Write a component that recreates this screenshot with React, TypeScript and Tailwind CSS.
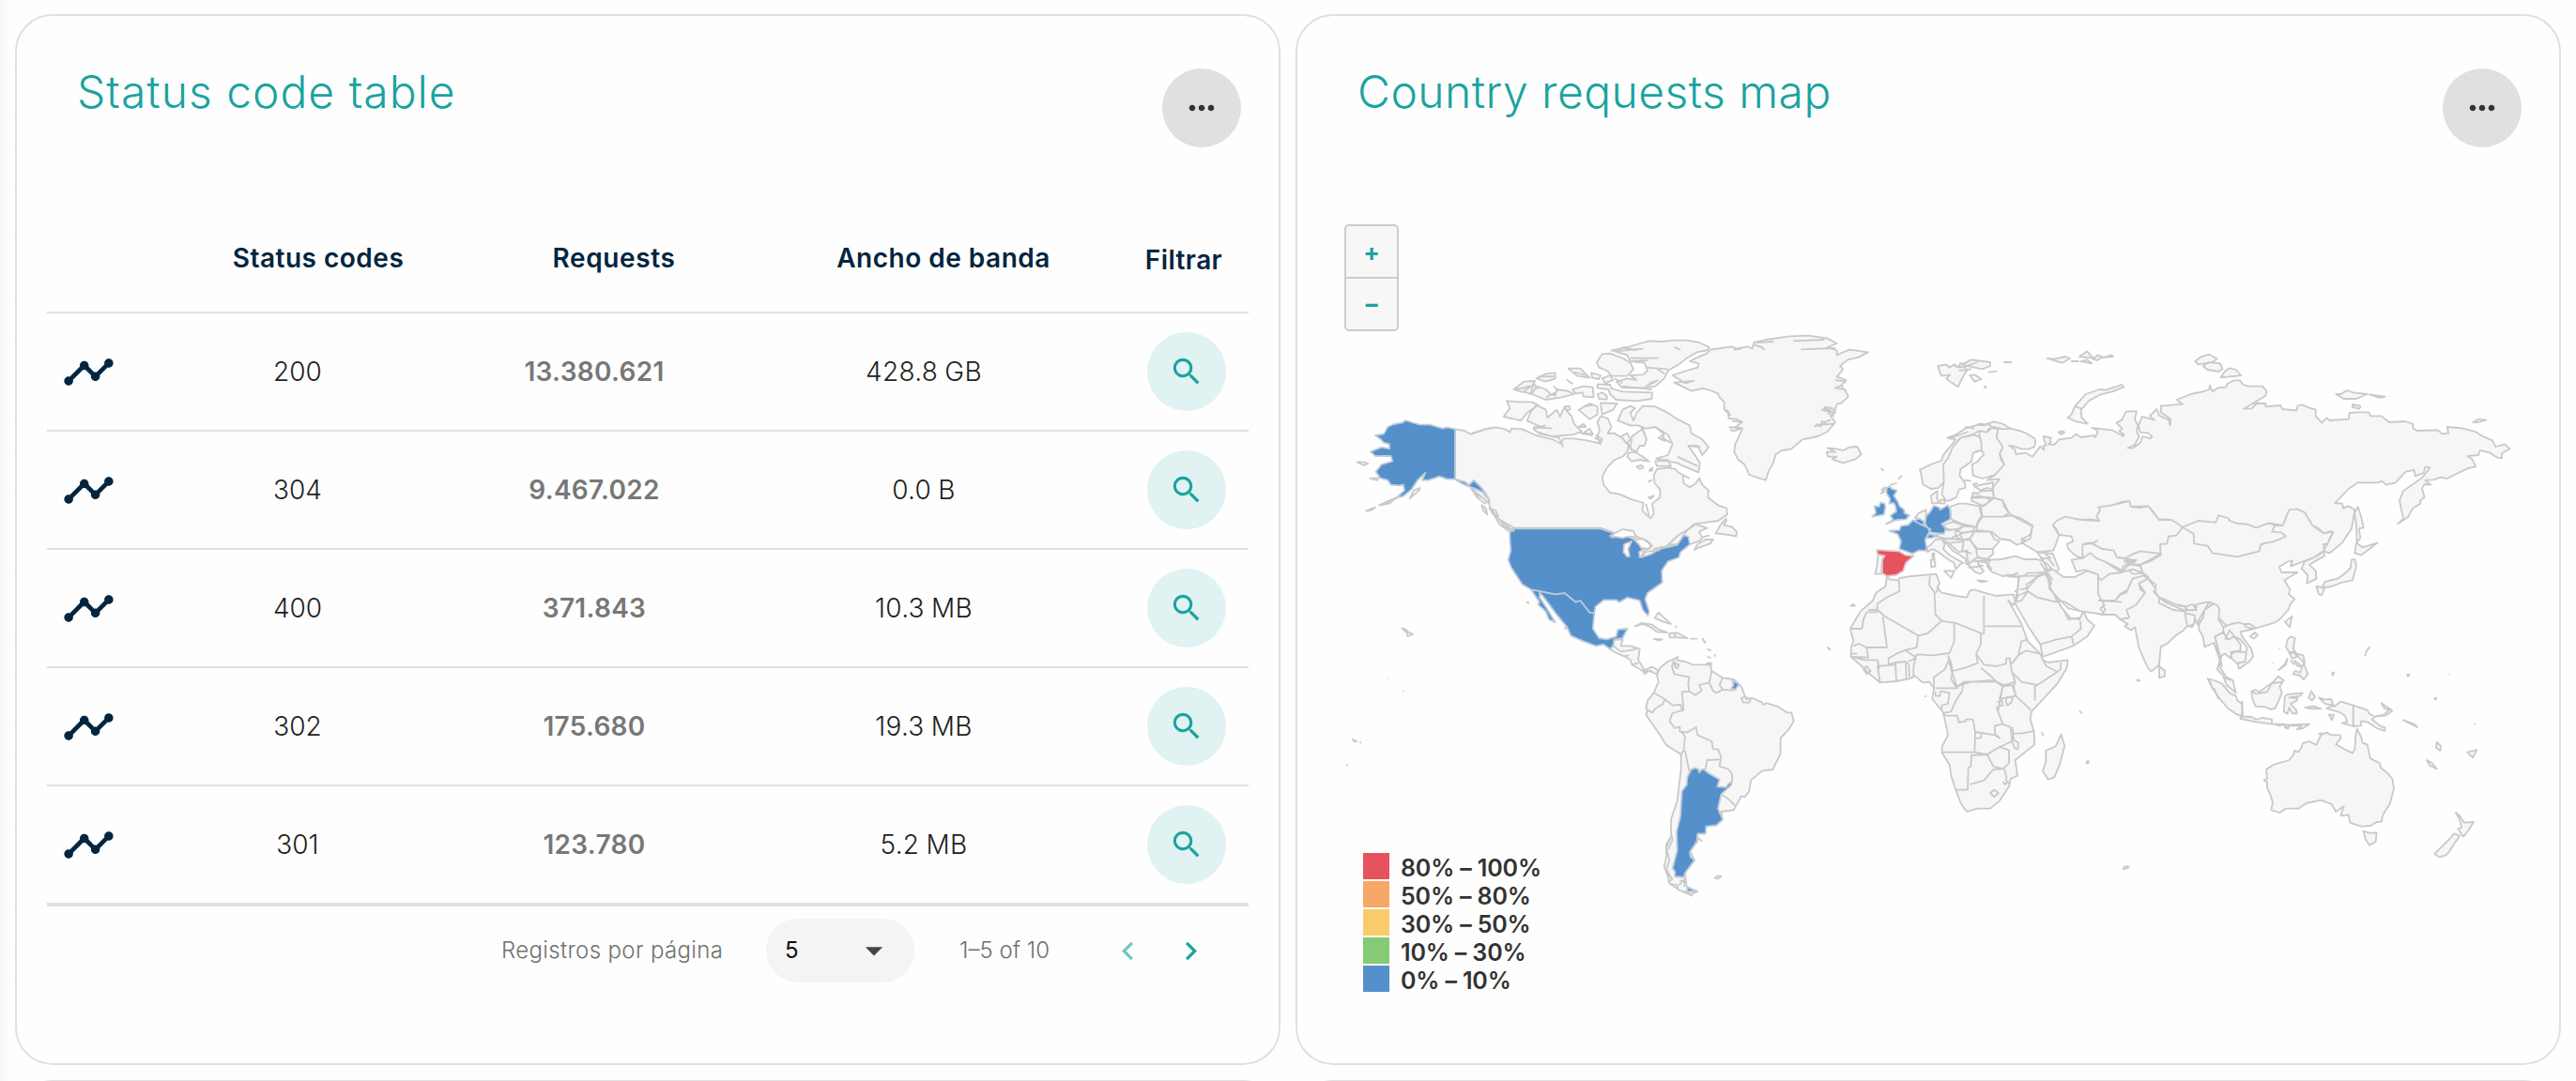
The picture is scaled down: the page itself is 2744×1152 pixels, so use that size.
import React from 'react';
import { MdTimeline, MdSearch, MdMoreHoriz, MdArrowDropDown, MdChevronLeft, MdChevronRight } from 'react-icons/md';

type Tile = { x: number; y: number; land?: string; blue?: string; red?: string; water?: string; lines?: string };

// Each tile holds outlines at three units per pixel, offset from its own origin.
const tiles: Tile[] = [
  // Russia, central and east Asia
  {
    x: 2200,
    y: 350,
    land:
      'M-175 320L-150 326L-125 335L-98 352L-95 364L-100 380L-118 386L-140 385L-165 377L-180 375L-160 388L-158 402L-125 398L-105 410L-90 390L-80 377L-68 388L-70 375L-62 374L-70 345L-45 350L-50 357L-45 364L-55 370L-35 372L-20 355L20 350L35 338L50 348L92 342L95 348L104 330L96 322L85 318L150 325L185 345L188 340L172 328L182 320L163 302L180 293L195 265L228 265L222 290L232 310L228 330L236 345L222 372L200 382L215 383L240 365L247 345L272 352L278 346L264 334L238 332L234 310L245 282L285 293L270 280L292 258L300 278L330 292L335 310L337 290L305 268L305 248L375 242L356 228L372 222L400 210L440 202L460 195L462 182L470 202L488 190L512 188L520 175L540 166L558 166L568 180L585 185L630 185L643 200L640 215L570 257L595 256L615 237L600 240L640 240L640 250L688 246L694 258L740 262L742 248L756 244L780 254L800 260L800 280L820 302L835 286L845 294L905 290L908 270L930 268L970 268L975 280L1010 280L1035 300L1085 297L1110 305L1112 320L1125 327L1190 325L1205 337L1225 335L1220 315L1260 318L1310 330L1330 343L1365 358L1375 378L1405 370L1420 385L1395 400L1395 415L1378 412L1358 398L1325 390L1320 405L1285 408L1300 418L1312 442L1290 446L1250 465L1220 480L1200 476L1175 484L1150 485L1168 500L1148 498L1140 512L1148 540L1135 550L1135 560L1110 575L1096 602L1082 612L1062 625L1080 608L1068 550L1080 520L1140 478L1165 445L1150 443L1145 462L1118 472L1115 453L1088 458L1055 493L1025 500L1012 488L1000 493L935 493L905 513L862 558L885 560L888 575L905 568L925 580L915 640L885 685L845 718L825 712L838 688L855 655L850 648L825 655L810 640L790 630L765 588L740 577L715 580L708 598L695 630L650 622L610 637L580 626L550 624L525 615L520 606L490 598L480 620L425 615L375 635L340 612L310 610L300 612L280 585L265 568L240 573L210 570L205 552L180 555L150 565L105 572L112 580L100 600L108 615L80 610L50 612L0 602L-28 615L-40 630L-28 642L-20 660L-30 690L-38 710L-90 715L-140 685L-112 672L-105 630L-140 608L-170 598L-180 590L-200 550L-228 542L-232 510L-210 482L-250 485L-225 468L-195 435L-210 400L-200 380L-220 350L-215 320Z' +
      'M375 635L425 615L480 620L490 598L520 606L525 615L550 624L580 626L610 637L650 622L670 630L660 650L690 652L705 665L670 680L625 690L620 712L550 730L470 718L455 695L412 688L410 657Z' +
      'M375 635L410 657L412 688L455 695L470 718L550 730L620 712L625 690L670 680L705 665L690 652L660 650L670 630L695 630L708 598L715 580L740 577L765 588L790 630L825 655L855 650L838 688L825 690L828 712L800 730L760 745L722 760L725 742L712 745L684 762L690 780L705 780L742 780L700 805L718 835L714 850L733 865L720 880L712 900L685 930L670 940L610 958L590 945L555 945L515 950L505 940L490 925L485 890L460 875L440 880L410 895L365 885L350 885L320 872L300 860L285 840L290 820L265 800L245 780L240 755L270 745L305 725L303 690L325 688L330 665L355 662Z' +
      'M-40 630L-28 615L0 602L50 612L108 615L100 600L112 580L105 572L150 565L205 552L210 570L265 568L300 612L340 612L375 635L355 662L330 665L325 688L303 690L305 720L240 712L215 722L190 735L165 732L155 710L118 705L80 685L55 690L55 735L30 725L10 705L5 690L25 680L20 665L-20 660Z' +
      'M55 735L80 718L100 735L125 745L180 780L140 785L115 805L90 780L60 772L35 778L20 740L45 735ZM55 690L80 685L118 705L155 710L165 732L190 735L205 750L185 775L125 745L100 735L80 718L55 735ZM190 735L215 722L240 712L305 720L270 740L240 755L210 755L225 742ZM180 780L185 760L215 755L240 760L248 782L215 770Z' +
      'M105 795L115 805L140 785L180 780L205 772L215 785L248 782L265 795L215 800L200 835L175 850L160 870L115 872L103 855Z' +
      'M755 768L765 745L790 735L825 712L828 728L805 740L780 755L800 775L803 800L772 815L775 790L762 775ZM930 685L950 700L998 685L965 710L945 725L925 718ZM925 738L930 760L918 805L885 812L850 825L820 830L830 810L870 800L895 782L912 765L914 740ZM802 825L830 828L820 852L810 850ZM935 570L945 600L953 637L938 640L943 670L932 685L930 630L924 590Z' +
      'M8 285L20 275L30 250L65 210L110 195L130 197L180 180L187 187L150 202L110 212L75 232L50 260L52 285L72 305L35 298ZM415 105L435 90L460 83L485 97L470 108L425 115ZM440 120L460 108L495 112L502 130L490 138L455 132ZM497 157L510 137L525 127L545 132L562 150ZM865 210L880 210L900 198L920 205L965 210L930 225L890 225ZM972 211L1022 218L1005 222ZM917 243L943 248L940 257L918 252ZM1303 300L1320 290L1345 293L1320 300ZM-22 332L-12 328L-3 332L-12 339Z',
    lines: 'M30 250L55 257M78 690L105 678M85 685L98 695M60 690L95 685M185 745L230 740M190 752L225 745M725 742L720 762',
  },
  // South and south-east Asia, Oceania
  {
    x: 2220,
    y: 600,
    land:
      'M50 120L55 122L100 120L115 102L135 95L155 50L190 40L205 50L175 65L195 95L165 135L135 150L145 175L115 180L100 165L55 165L68 150Z' +
      'M175 65L205 50L230 85L222 92L240 110L260 125L320 152L360 150L350 135L390 125L415 130L385 150L380 175L365 200L355 180L352 195L325 205L318 215L295 230L265 258L245 268L240 325L215 347L205 337L190 305L175 270L163 205L150 215L130 202L140 195L115 180L145 175L135 150L165 135L195 95L180 85Z' +
      'M240 110L260 118L300 135L325 140L323 155L285 150L240 128ZM322 160L355 168L352 190L345 205L330 200ZM325 140L345 132L360 140L355 150L330 150ZM240 330L258 345L258 362L240 367Z' +
      'M365 185L385 150L400 125L425 135L432 145L430 180L445 205L445 220L418 235L425 260L435 300L440 330L415 255L385 268L380 235L368 215Z' +
      'M418 235L445 222L460 245L480 235L500 260L500 280L470 285L470 305L450 290L440 295L432 330L455 365L475 375L485 415L455 390L445 360L425 340L435 310Z' +
      'M445 205L470 195L495 190L510 195L520 205L545 210L500 220L505 235L535 275L540 300L528 315L495 338L490 320L515 315L520 270L500 245L490 240L480 235L460 245L445 220ZM470 290L485 283L518 285L515 315L490 322L472 305ZM530 235L545 222L555 230L543 242ZM642 188L665 170L657 205Z' +
      'M650 245L660 235L674 240L668 275L680 290L655 285L645 268ZM655 285L670 285L680 300L665 305ZM680 290L700 295L705 318L695 312L685 300ZM672 312L685 320L695 332L680 328ZM668 355L675 345L690 350L702 320L715 355L702 372L690 360ZM622 342L640 325L650 305L645 325Z' +
      'M395 370L415 375L440 385L465 415L485 425L490 440L505 450L507 488L490 485L460 465L430 430L410 400ZM500 490L535 492L550 500L570 495L600 500L600 515L550 508L500 498ZM605 515L640 515L625 520ZM640 518L720 515L700 528L680 532L695 520L655 520L650 530ZM535 410L548 405L560 412L605 380L620 362L638 375L625 395L632 415L622 440L610 465L595 468L580 460L548 458L538 435ZM642 425L650 420L698 415L690 425L655 430L682 432L680 440L660 450L678 470L680 482L665 480L655 462L650 482L638 475L640 455ZM718 430L726 410L738 428L728 440ZM707 462L735 458L757 466L725 466Z' +
      'M750 430L770 436L790 435L798 460L820 443L860 455L905 470L912 482L930 492L920 500L945 520L962 527L960 537L935 528L905 508L885 505L885 520L860 522L825 512L840 508L835 490L820 478L775 465L795 455L770 450ZM933 490L965 488L985 472L950 448L960 465L975 470L958 485ZM1020 502L1055 515L1065 525L1045 515ZM1127 573L1140 585L1138 600L1125 590ZM1095 630L1112 640L1127 658L1105 648ZM1225 605L1255 597L1242 622ZM783 485L798 485L792 502Z' +
      'M582 660L605 645L655 630L670 612L672 600L684 605L695 590L698 577L720 570L742 582L757 550L775 542L790 550L818 550L820 560L805 580L830 594L858 608L865 595L868 550L872 530L885 555L890 575L905 580L915 625L945 640L948 655L970 672L985 690L990 720L985 740L978 768L955 805L950 827L935 828L915 840L885 842L850 830L845 805L820 808L830 778L805 795L790 770L775 765L757 758L710 768L685 785L645 785L625 798L598 790L603 765L595 740L585 720L585 700L575 695L585 688ZM893 857L910 863L935 862L932 890L912 902L900 885ZM1188 798L1200 808L1215 830L1245 828L1228 855L1212 875L1195 850L1207 845L1200 820ZM1183 865L1200 872L1165 925L1155 935L1135 940L1120 930L1145 905L1165 885Z' +
      'M1033 356h5v5h-5ZM1121 432h4v4h-4ZM793 350h6l-5 10ZM170 374h7v3h-7ZM8 634h6v6h-6ZM1246 514h5M1166 356h3M622 274h4M603 319h3',
    lines:
      'M860 455V522M535 410L550 418L585 412L600 385L632 380M898 297L903 280L913 268M124 978L130 970H143L138 976ZM443 365L470 375M450 245L465 215L480 235M660 310L672 325M415 400L430 435M640 525L655 530M748 546L762 544M400 375L410 400M505 440V495',
  },
  // Europe
  {
    x: 1940,
    y: 340,
    land:
      'M373 150L400 145L410 155L425 145L440 155L445 140L460 150L465 165L450 190L437 217L415 202L400 190L412 178L385 182L378 168ZM450 145L480 130L540 138L540 150L515 160L490 155ZM475 180L490 178L512 192L490 200ZM722 126L745 128L780 120L795 126L770 140ZM800 135h22ZM825 120L850 103L860 115L870 125ZM830 135L850 130L865 142ZM868 128L885 115L898 122L880 132ZM900 123L928 115L932 120ZM535 170L560 167ZM585 138L607 138ZM521 216h5v4Z' +
      'M318 490L315 482L350 465L385 452L390 435L430 385L403 380L430 370L460 350L500 338L520 340L550 328L580 335L605 350L580 352L550 345L530 362L505 357L480 372L445 380L420 410L405 445L390 465L392 520L375 540L350 543L325 528Z' +
      'M505 375L480 370L445 380L420 410L405 445L390 465L392 520L385 560L400 582L415 578L432 570L440 545L460 540L460 525L442 500L445 480L480 455L485 430L495 423L512 420L512 395Z' +
      'M505 370L505 357L530 362L535 350L565 350L560 380L572 395L580 410L570 430L575 450L585 465L555 498L515 510L485 500L482 465L500 455L520 432L512 420L512 395Z' +
      'M350 565L372 550L370 570L375 588L355 590ZM380 578h14v12h-14ZM490 535L520 528L550 522L548 545L530 540L510 548ZM482 572L485 555L500 558L510 550L548 548L552 572L530 570ZM482 582L480 570L505 566L540 575L530 590L520 598L500 590Z' +
      'M412 600L440 590L460 590L505 598L512 630L500 648L495 665L450 655L415 640ZM510 600L530 590L552 572L580 580L585 600L600 620L580 632L515 632ZM515 632L580 632L610 628L640 645L675 662L668 690L640 705L645 715L625 722L605 708L570 702L545 680L495 675L500 655Z' +
      'M300 635L312 620L335 610L335 650L320 645ZM182 753L203 757L195 770L192 815L172 815L178 790ZM340 745L338 730L350 722L365 705L385 703L395 720L390 735L410 755L455 780L445 783L430 800L425 780L400 765L375 745L355 735ZM393 805L425 805L415 828ZM350 770L362 768L365 790L352 794ZM355 750L361 748V764H356ZM388 660L420 648L455 660L440 670L410 675ZM365 695L395 675L430 672L430 692L415 702L390 700ZM435 678L455 662L490 665L485 678L450 684ZM430 695L450 684L490 678L475 702L450 706ZM475 702L490 680L515 680L540 680L555 705L570 710L548 735L500 735L485 720ZM495 735L548 735L550 750L530 768L500 762ZM390 705L415 702L450 706L475 705L495 735L500 762L480 775L465 785L460 765L420 740ZM470 785L480 775L500 762L535 768L525 778L500 775L505 790L520 805L508 815L490 808Z' +
      'M500 835L530 838L510 841ZM590 820L612 818L628 812L608 825ZM497 425L500 425Z' +
      'M540 770L575 768L620 758L650 768L690 768L710 775L728 808L685 812L660 812L650 820L620 825L600 818L580 822L545 808L530 790ZM690 745L740 750L760 800L745 812L725 785L710 775ZM192 478L198 484ZM248 510L257 502ZM193 545L205 538L198 555ZM222 530L240 525Z' +
      'M17 425L45 425L20 412L50 415L70 420L90 410L115 408L128 432L110 448L70 460L35 448L50 440L22 440Z',
    blue:
      'M360 597L378 603L380 610L405 595L412 610L413 640L385 655L398 670L392 687L350 682L332 655L335 630L347 618ZM298 645L312 638L325 645L330 660L315 655ZM293 643L315 655L350 672L340 690L332 705L338 740L310 740L292 750L250 735L255 710L245 688L218 677L250 675L255 662L278 658ZM335 700L345 688L370 692L352 700ZM210 540L220 535L225 543L242 548L232 565L245 585L250 598L265 610L265 620L282 628L270 640L240 642L208 655L230 642L222 628L240 615L238 600L232 588L218 590L220 575L208 555ZM170 598L185 600L190 587L202 590L205 600L200 625L163 632L175 620Z',
    red: 'M178 738L200 740L250 743L270 755L295 757L270 780L262 805L240 818L210 822L195 812L195 770L203 757L180 752Z',
    lines:
      'M425 150L455 155M450 155L500 138M440 165L480 160M460 345L490 350M500 335L540 338M420 378L470 360M408 384L440 370M530 332L545 345M400 710L440 745M410 715L455 712L450 740L480 750M455 712L445 690M440 745L470 740M480 775L540 770M470 795L510 790M700 765L725 765L745 790M715 750L735 765M520 770L545 800M465 745L470 780M500 785L520 790M640 700L655 710M495 540L485 528L500 525M455 515L480 518M200 548L190 560',
  },
  // Africa and the Middle East
  {
    x: 1940,
    y: 580,
    land:
      'M210 103L218 112L245 115L250 108L290 102L345 97L368 95L378 125L370 140L385 155L430 165L465 170L475 148L490 145L520 155L560 165L615 160L620 185L612 195L597 178L640 255L660 310L700 350L708 370L725 378L788 370L785 395L755 445L700 505L672 535L668 560L680 600L682 640L620 690L627 740L605 750L600 775L570 820L540 845L500 845L465 855L447 830L430 785L415 740L410 705L385 665L387 645L405 610L395 560L388 535L355 495L360 460L345 440L325 442L300 422L280 430L240 438L188 442L155 415L130 390L95 360L95 330L103 310L93 270L125 215L165 180L175 155L205 135Z' +
      'M767 608L778 645L760 710L745 745L725 752L708 725L718 695L718 660L750 645ZM22 330L28 336ZM93 197L102 192L108 197ZM331 486h5M705 603L709 610ZM827 534L832 540ZM848 698L853 694Z' +
      'M628 165L660 150L655 130L690 105L715 95L725 110L730 135L755 180L770 205L795 235L825 240L838 215L850 240L873 260L850 295L805 325L708 360L700 320L660 260L620 190ZM632 102L690 100L720 88L735 125L728 140L750 165L752 185L690 170L660 150L640 180L620 185L628 140Z' +
      'M715 80L740 80L775 105L810 105L850 85L885 97L885 160L905 195L892 205L905 225L835 215L790 205L760 175L750 165L728 140L735 125L720 95Z',
    lines:
      'M248 115L250 150L210 170L180 190L178 217H145L135 240L130 270L95 270M150 210H180M180 210L205 232L310 292M197 232L210 330L145 330L120 318L103 325M310 292L340 285L385 245L365 225L362 155L345 130L348 97M365 155L378 140M385 245L415 250L425 250L520 288M520 165V285M520 262H640M310 292L305 330L270 338L240 350L215 365L215 385M305 352L355 355L410 348L425 310L425 250M510 285L510 320L495 350L500 380L460 395L420 405L415 380L405 355M495 350L520 385L560 390L590 382L592 365H603L605 385L612 378L630 355L640 310L660 305M605 385L610 410L620 440L585 450L560 440L540 420L510 395M420 405L415 430L430 455L480 440L540 435L560 440M630 355L655 340L700 350M610 410L640 440L690 450L755 408L720 390L708 370M755 408L765 400V378M683 500V455L690 450M620 440L615 455L622 485L670 530M580 455L610 450L622 485L570 495ZM455 440L450 470L430 500L415 535L390 540L395 548H435L440 570L462 565V560H485L492 600L555 610L570 620L555 605L555 580L580 575L565 535L580 455L560 440L510 440ZM492 600L490 665H385M490 665L530 672L480 675L478 710L470 715L468 785L430 785M490 620H510L512 600M530 672L570 648L610 630L605 585L580 575M530 672L550 710L580 718L600 700L600 658L570 648M475 768L520 755L550 720L580 718M610 630L618 652L628 655L630 635L615 625L612 585M615 605L640 605L680 597M585 718L592 745L590 755L600 765M580 760L588 768L595 760M540 795L553 785L566 795L553 808ZM410 365L395 400L360 425L360 460M405 355L415 400L435 460H365M365 470V485L380 485V470M380 470L410 475L405 510L385 515L385 530M435 455L455 440M295 422L295 390L305 352M282 425L280 385L270 375M278 375L300 365M240 438L237 378L270 375L272 430M188 442L180 390L235 385M105 362L140 370L180 370L185 395L180 410M215 385L235 378M270 340L300 360M95 360L150 362L145 330M95 350L115 350M135 400L145 390L158 405L145 415ZM590 500L595 488L612 490L608 505L595 515ZM562 505L578 500L580 515L562 520M565 535L560 520M632 105L625 175M635 145L660 140L690 105M700 320L750 305L800 295L830 270L828 245M800 295L808 325M618 150L630 150M775 210L790 240L825 235M750 180L780 185L830 215M885 180L905 180L960 185M700 60L715 80L740 115M710 80L735 85',
  },
  // South and Central America
  {
    x: 1700,
    y: 640,
    land:
      'M198 230L205 215L230 195L262 180L258 190L285 195L310 205L365 205L370 225L405 247L440 252L465 275L480 315L500 312L530 325L535 333L545 328L580 338L610 358L625 358L632 385L618 410L590 440L590 490L565 540L530 545L495 575L490 610L475 628L465 625L440 670L400 675L405 700L385 718L352 722L350 745L325 745L325 770L300 800L315 830L285 870L290 915L325 930L300 940L265 925L235 905L228 875L218 850L225 820L225 780L240 755L240 700L260 640L272 540L272 492L225 462L205 430L160 365L165 350L160 345L165 320L185 295L200 260L195 240Z' +
      'M45 155L60 125L85 125L80 145L110 145L140 155L135 190L155 222L180 212L198 222L195 235L170 225L155 235L150 225L115 205L110 190L90 178L60 165Z' +
      'M125 82L145 72L180 77L200 92L228 102L195 100L175 85L150 75ZM235 105L260 103L292 120L260 118L235 118ZM185 123L212 124L200 128ZM303 122H322ZM188 55L200 38L218 55L240 75L215 68ZM342 122L345 130L350 135ZM358 155L366 160ZM358 180L365 183ZM355 200H368V208ZM380 173v4ZM743 152l4 5ZM380 887L388 880L400 882L390 890ZM328 760L338 768ZM255 83v3Z',
    blue:
      'M305 540L318 535L328 540L330 550L338 540L345 540L360 552L395 572L388 595L415 597L425 585L435 577L432 590L400 620L390 665L405 700L385 718L352 722L350 745L325 745L322 770L300 805L303 820L315 830L300 850L285 870L280 885L252 882L253 868L245 855L260 800L258 740L270 690L275 610L290 590L292 565ZM292 915L300 920L325 930L292 930ZM436 255L457 268L445 285L433 280L440 270Z',
    lines:
      'M250 190L243 210L250 235L298 245L295 265L298 290L318 302L338 288L330 270L362 262L370 225M362 262L375 290L385 295L405 285L440 287M405 247L395 270L405 285M298 290L275 292L280 350L245 360L235 385L252 408L268 403L268 418L290 422L320 405L325 430L370 450L375 475L390 475L400 500L395 530L425 540L435 555V580M185 295L220 315L215 330L190 345L180 358L165 350M220 315L245 335L270 333L275 348M272 418L285 435L280 480L272 492M285 480L298 545L305 540M350 540L355 510L395 508M400 620L420 632L445 655M465 312L475 308L495 315L490 326H470ZM252 200L265 205L260 217L252 210ZM75 163L100 160L130 155M90 178L105 175M50 140L75 160M240 755L225 790L235 830L225 860L240 885M235 905L260 910L262 925M268 895L290 900M242 750L245 765L232 795M228 875L245 890L230 900M265 910L285 890L282 915M280 930L300 935M300 940L310 944M135 200L115 205M250 103L255 118M150 225L180 225',
  },
  // Greenland
  {
    x: 1780,
    y: 340,
    land:
      'M5 180L40 168L85 155L88 142L60 135L80 125L115 110L125 98L160 93L195 88L210 95L245 88L260 95L265 75L310 65L380 55L440 53L500 62L530 78L500 90L530 100L530 115L570 98L630 106L600 122L565 130L540 150L550 160L530 185L560 195L545 212L525 220L555 225L567 248L545 268L530 272L522 298L510 310L525 330L500 360L470 375L420 385L385 415L355 420L335 432L325 465L312 485L303 515L280 508L250 498L235 465L215 450L202 425L205 400L215 380L228 350L205 345L228 330L210 320L185 318L182 300L170 288L170 265L155 250L150 238L125 228L100 222L65 230L35 215L10 203L50 200L72 198L45 205Z',
    lines:
      'M390 70L490 66M415 97L525 93M185 345L225 350L200 358L188 352M460 340L520 335M458 345L490 330L510 322M480 290L525 300L515 285L490 282L500 295M500 300L522 310M485 288L512 292M195 325L225 330M275 75L328 72M265 82L295 92M200 98L225 95M280 85L300 98M480 325L500 340M465 335L480 345M525 195L560 200M545 210L550 225M178 290L190 310',
  },
  // North America
  {
    x: 1400,
    y: 340,
    land:
      'M450 352L480 357L500 368L545 352L580 346L610 352L625 362L630 350L665 352L708 372L765 386L790 400L795 382L830 382L870 388L915 398L920 385L905 375L912 355L905 330L915 310L938 318L950 345L938 366L960 365L965 370L985 380L1000 400L1005 400L1000 425L985 440L960 450L935 475L920 505L925 530L945 555L975 560L1010 575L1052 588L1048 612L1060 625L1075 637L1085 622L1080 590L1105 570L1105 545L1088 525L1085 500L1095 480L1130 475L1155 480L1165 492L1178 498L1180 525L1200 538L1220 525L1230 508L1240 530L1260 548L1258 570L1290 595L1318 605L1320 625L1290 645L1240 652L1215 655L1195 672L1180 690L1165 720L1130 722L1105 740L1075 750L1045 762L1050 745L1080 725L1065 710L1040 700L1015 685L965 685L915 668H640L625 680L590 655L575 625L560 600L558 575L530 535L510 516L490 535L450 512Z' +
      'M1215 738L1225 720L1250 705L1275 705L1265 718L1230 730ZM1200 720L1180 690L1195 672L1215 655L1255 668L1230 680L1240 700L1230 710ZM1283 685L1300 655L1315 638L1318 645L1308 658L1335 665L1350 680L1348 695L1325 690ZM1240 698L1260 692Z' +
      'M615 262L655 265L695 265L715 275L680 300L660 325L632 318L605 312L625 285ZM710 275L740 290L745 315L775 290L785 312L800 280L812 300L822 310L830 335L855 360L825 370L760 375L710 360L700 350L725 345L680 325L690 300ZM637 225L670 200L705 198L690 240L680 235L660 232ZM695 240L710 215L740 225L755 240L770 245L775 225L810 230L830 240L790 250L740 258ZM710 190L740 175L770 172L770 190L740 200ZM812 158L850 158L880 188L840 182ZM825 225L860 215L890 218L893 250L860 248L858 235L835 238ZM905 240L920 235L935 245L935 257L910 255ZM845 290L880 270L905 280L905 305L880 320L862 305ZM915 268L968 270L955 290L920 305ZM885 172L915 180L910 192L888 188ZM920 190L945 180L955 195L930 205ZM845 345L860 335L868 345ZM800 280L815 278L818 290L805 292ZM860 365L880 350L890 368ZM808 195L825 207Z' +
      'M905 208L945 210L950 222L985 232L1080 235L1078 255L1030 262L965 258L945 240L940 225L905 220ZM950 100L1000 90L1070 70L1110 72L1150 68L1190 68L1230 75L1262 90L1255 100L1225 105L1190 125L1165 145L1130 165L1118 190L1090 215L1050 220L985 220L965 200L1000 190L1030 195L1010 180L1050 178L1065 165L1055 140L1010 135L1000 115ZM903 138L920 112L945 110L985 125L1010 140L1020 160L1000 182L950 182L935 165L910 155Z' +
      'M970 325L985 290L1010 278L1025 285L1010 300L1020 325L1030 300L1050 278L1090 280L1110 290L1130 300L1160 320L1200 340L1205 365L1240 385L1260 410L1240 435L1225 405L1195 405L1220 440L1232 460L1228 490L1180 470L1160 460L1130 455L1095 445L1130 435L1145 400L1130 370L1090 345L1060 350L1035 340L1010 340ZM1000 440L1005 428L1025 425L1050 440L1070 455L1040 450L1015 455ZM1010 415L1015 375L1050 350L1062 385L1055 405L1040 405L1030 425ZM980 375L1000 365L1010 385L998 398ZM1030 472L1045 467L1052 475L1040 480ZM1070 485L1080 475V485ZM1068 520L1078 515ZM1068 570L1085 565L1075 575ZM1090 455L1130 450L1140 470L1120 470L1095 470ZM1100 380L1115 370L1120 390Z' +
      'M260 572L235 582L208 595L240 590ZM195 602L166 614L185 610ZM137 457L160 458L172 462L158 468ZM178 510L205 508L200 516ZM305 574L335 548L338 540L318 548ZM280 989L292 992L300 1000L315 1008L298 1014V1005ZM500 540L530 545L560 580L545 590L520 570ZM535 595L548 605L553 625L540 612ZM560 605L580 612L588 630L572 625ZM590 640L635 665L638 680L605 660ZM801 987h4v4ZM680 905h4v3Z',
    blue:
      'M450 352L425 346L410 350L370 338L335 337L310 330L292 324L280 332L255 336L235 345L222 368L195 372L212 384L222 395L240 400V415L215 410L180 424L195 438L245 438L250 455L215 465L197 488L210 508L235 515L245 530L270 532L285 530L288 548L262 572L285 566L310 545L330 515L355 492L345 515L365 515L400 503L425 512L450 512ZM450 512L480 520L495 530L510 516L530 535L550 560L520 545L495 535L470 525Z' +
      'M625 682L640 670H915L960 685L950 698L1000 695L1025 705L1040 708L1060 730L1038 745L1040 762L1075 752L1105 735L1160 722L1180 692L1195 695L1200 720L1170 745L1165 762L1130 775L1110 805L1112 842L1065 875L1057 895L1070 935L1066 948L1050 930L1040 900L1000 890L975 905L965 898L925 898L898 920L895 940L880 938L850 900L835 905L800 876L770 880L720 870L693 865L665 848L630 795L620 770L628 740L625 700Z' +
      'M693 865L720 870L770 880L800 876L835 905L850 900L880 938L895 940L890 990L910 1020L935 1024L965 1015L970 993L1000 990L985 1020L958 1025L955 1045L945 1055L925 1040L900 1045L860 1030L820 1012L808 985L775 945L745 905L730 885L720 875L720 890L740 920L770 970L750 960L740 935L715 912L720 905Z',
    water:
      'M1000 760L988 745L990 720L1015 710L1003 735L1008 758ZM945 693L985 672L1020 678L1028 698L1005 695L985 700ZM1022 705L1050 702L1075 722L1070 735L1045 732L1035 718ZM1045 762L1060 745L1085 740L1080 750ZM1085 735L1115 728L1100 740Z',
    lines:
      'M1130 722L1165 690L1215 660M960 103L1050 95M985 90L1030 100M1010 125L1100 125M1060 155L1130 160M1010 135L1065 132M960 190L985 205M1060 215L1090 200M1150 90L1170 98M715 185L765 183M645 225L690 215M670 230L700 210M700 205L715 225M765 215L780 230M740 250L770 235M830 170L870 180M700 345L760 350M715 365L780 380M780 375L795 410M850 365L890 372M900 370L915 400M895 380L920 390M545 352L570 348M505 365L540 355M1000 395L1015 420M1045 345L1060 380M1090 445L1120 455M1195 405L1235 410M1160 440L1225 470M1090 345L1120 370M1110 380L1140 395M500 540L560 590M560 600L590 640M590 640L640 680M515 560L545 575M1180 500L1200 510M1060 590L1070 630M860 280L890 275M700 350L740 340M985 215L1080 225M1070 205L1100 195M1095 160L1120 175M208 596L265 572M166 614L195 602',
  },
  // Pacific islands
  { x: 1400, y: 640, lines: 'M122 444L136 450L128 450ZM145 454h6M235 248h3M283 290h4M103 525l5 3' },
];

function WorldMap() {
  return (
    <svg viewBox="1400 340 1308 640" className="block h-[640px] w-[1308px]" fill="none" strokeLinejoin="round">
      {tiles.map((t, i) => (
        <g key={i} transform={`translate(${t.x} ${t.y}) scale(0.33333)`} stroke="#c9c9c9" strokeWidth="5.4">
          {t.land && <path d={t.land} fill="#f6f6f6" />}
          {t.blue && <path d={t.blue} fill="#5590cb" stroke="#bccbdb" />}
          {t.red && <path d={t.red} fill="#e6525e" stroke="#d9c6c9" />}
          {t.water && <path d={t.water} fill="#fefefe" />}
          {t.lines && <path d={t.lines} />}
        </g>
      ))}
    </svg>
  );
}

function Card({ title, titleClass, children }: { title: string; titleClass: string; children: React.ReactNode }) {
  return (
    <section className="h-[1120px] w-[1348px] shrink-0 rounded-[40px] border-2 border-[#e0e0e0] bg-[#fefefe]">
      <header className="flex h-[180px] items-start justify-between pt-[56px] pr-10 pl-16">
        <h2 className={`-mt-px text-[48px] leading-[52px] font-light whitespace-nowrap text-[#1aa39f] ${titleClass}`}>{title}</h2>
        <button className="flex size-[84px] items-center justify-center rounded-full bg-[#e0e0e0] text-[#333]">
          <MdMoreHoriz size={40} />
        </button>
      </header>
      {children}
    </section>
  );
}

const rows = [
  ['200', '13.380.621', '428.8 GB'],
  ['304', '9.467.022', '0.0 B'],
  ['400', '371.843', '10.3 MB'],
  ['302', '175.680', '19.3 MB'],
  ['301', '123.780', '5.2 MB'],
];

const grid = 'grid grid-cols-[102px_330px_302px_400px_146px] items-center text-center';

function StatusTable() {
  return (
    <div className="mx-8 w-[1280px]">
      <div className={`${grid} h-[137px] border-b-2 border-[#e0e0e0] pt-[21px] text-[28px] font-semibold text-[#03253f]`}>
        <span />
        <span className="pl-[44px] tracking-[0.5px]">Status codes</span>
        <span className="pl-[42px] tracking-[0.6px]">Requests</span>
        <span className="pl-[42px] tracking-[0.5px]">Ancho de banda</span>
        <span className="pt-[3px] pl-[8px] tracking-[0.4px]">Filtrar</span>
      </div>
      {rows.map(([code, requests, band], i) => (
        <div
          key={code}
          className={`${grid} ${i === 4 ? 'h-[128px] border-b-4' : 'h-[126px] border-b-2'} border-[#e0e0e0] text-[28px] text-[#1f1f1f]`}
        >
          <span className="flex pl-4 text-[#03253f]">
            <MdTimeline size={57} />
          </span>
          <span className="font-light">{code}</span>
          <span className="font-semibold tracking-[0.3px] text-[#777]">{requests}</span>
          <span className="font-light tracking-[0.3px] [word-spacing:-1px]">{band}</span>
          <span className="flex justify-end pr-6">
            <button className="flex size-[84px] items-center justify-center rounded-full bg-[#e0f2f1] text-[#1aa39f]">
              <MdSearch size={38} />
            </button>
          </span>
        </div>
      ))}
      <div className="flex h-[94px] items-center justify-end text-[24px] font-light text-[#707070]">
        <span className="w-[234px] tracking-[0.35px] whitespace-nowrap">Registros por página</span>
        <div className="ml-12 flex h-[68px] w-[158px] items-center justify-between rounded-[34px] bg-[#f4f4f4] pr-[23px] pl-5 font-normal text-[#111]">
          5
          <MdArrowDropDown size={44} color="#444" className="mr-[-2px]" />
        </div>
        <span className="ml-12 w-[98px] whitespace-nowrap">1–5 of 10</span>
        <MdChevronLeft size={39} color="#76c4c1" className="ml-[62px]" />
        <MdChevronRight size={39} color="#1aa39f" className="mr-[42px] ml-7" />
      </div>
    </div>
  );
}

const legend = [
  ['bg-[#e6525e]', '80% – 100%'],
  ['bg-[#f7a765]', '50% – 80%'],
  ['bg-[#f9cb6a]', '30% – 50%'],
  ['bg-[#86ca73]', '10% – 30%'],
  ['bg-[#5590cb]', '0% – 10%'],
];

function MapPanel() {
  return (
    <div className="relative h-[900px] pt-[143px] pl-[18px]">
      <WorldMap />
      <div className="absolute top-[42px] left-[50px] flex h-[114px] w-[58px] flex-col rounded-[5px] border-2 border-[#ccc] bg-[#f7f7f7] text-[26px] font-bold text-[#1aa39f]">
        <button className="h-14 border-b-2 border-[#ccc] pt-0.5 leading-none">+</button>
        <button className="flex-1 leading-none">−</button>
      </div>
      <ul className="absolute top-[712px] left-[70px] flex flex-col gap-0.5">
        {legend.map(([color, label]) => (
          <li key={label} className="flex h-7 items-center gap-3">
            <span className={`size-7 ${color}`} />
            <span className="pt-1 text-[25px] leading-6 font-semibold tracking-[-0.15px] whitespace-nowrap text-[#333]">{label}</span>
          </li>
        ))}
      </ul>
    </div>
  );
}

export default function App() {
  return (
    <main className="h-[1152px] w-[2744px] overflow-hidden bg-[linear-gradient(to_right,#f7f7f7,#fefefe_10px)] font-['Inter',sans-serif]">
      <div className="grid grid-cols-[1348px_1348px] gap-4 px-4 pt-[15px]">
        <Card title="Status code table" titleClass="tracking-[1px]">
          <StatusTable />
        </Card>
        <Card title="Country requests map" titleClass="tracking-[0.45px]">
          <MapPanel />
        </Card>
        <div className="h-[1120px] rounded-[40px] border-2 border-[#e0e0e0] bg-[#fefefe]" />
        <div className="h-[1120px] rounded-[40px] border-2 border-[#e0e0e0] bg-[#fefefe]" />
      </div>
    </main>
  );
}
